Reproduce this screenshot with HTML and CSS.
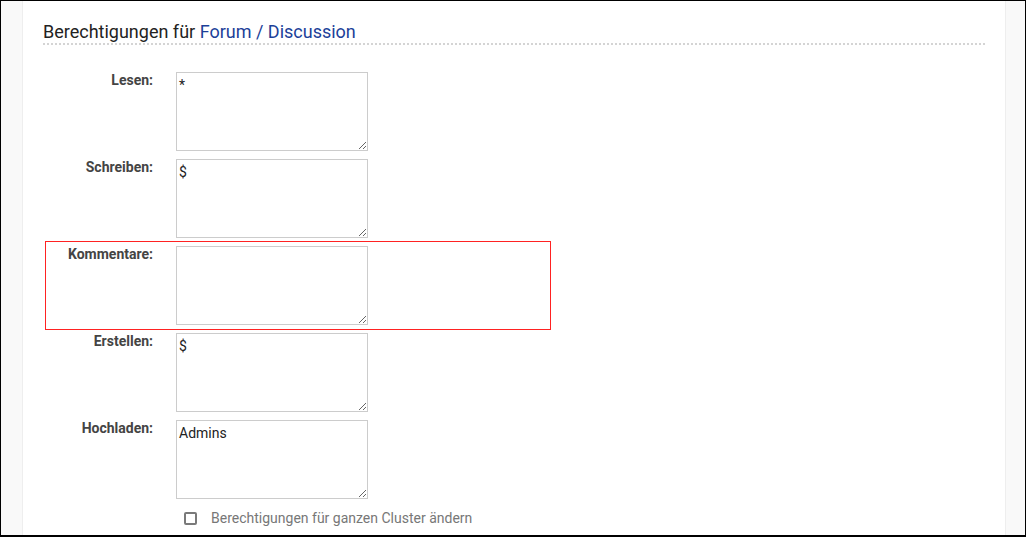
FILE: index.html
```html
<!DOCTYPE html>
<html lang="de">
<head>
  <meta charset="UTF-8">
  <title>Berechtigungen für Forum / Discussion</title>
  <link rel="stylesheet" href="styles.css">
</head>
<body>
  <div class="panel">
    <h2>Berechtigungen für <a href="#">Forum / Discussion</a></h2>

    <form class="perms">
      <div class="row">
        <label for="p-read">Lesen:</label>
        <textarea id="p-read">*</textarea>
      </div>
      <div class="row">
        <label for="p-write">Schreiben:</label>
        <textarea id="p-write">$</textarea>
      </div>
      <div class="row marked">
        <label for="p-comment">Kommentare:</label>
        <textarea id="p-comment"></textarea>
      </div>
      <div class="row">
        <label for="p-create">Erstellen:</label>
        <textarea id="p-create">$</textarea>
      </div>
      <div class="row">
        <label for="p-upload">Hochladen:</label>
        <textarea id="p-upload">Admins</textarea>
      </div>
      <div class="cluster">
        <span class="box"></span>
        <span>Berechtigungen für ganzen Cluster ändern</span>
      </div>
    </form>
  </div>
</body>
</html>
```

FILE: styles.css
```css
html, body {
  margin: 0;
  height: 100%;
}
body {
  box-sizing: border-box;
  height: 537px;
  overflow: hidden;
  border: 1px solid #000;
  border-bottom-width: 2px;
  background: #f9f9f9;
  padding: 0 19px 0 21px;
  font-family: Roboto, "Liberation Sans", sans-serif;
  color: #222;
}
.panel {
  background: #fff;
  border-left: 1px solid #eee;
  border-right: 1px solid #eee;
  height: 100%;
  padding: 21px 20px 0 20px;
  box-sizing: border-box;
}
h2 {
  margin: 0;
  font-size: 18px;
  font-weight: normal;
  line-height: 20px;
  padding-bottom: 1px;
  border-bottom: 2px dotted #d4d4d4;
  color: #222;
}
h2 a {
  color: #1c3f99;
  text-decoration: none;
}
.perms {
  margin: 23px 0 0 3px;
  width: 504px;
  display: flex;
  flex-direction: column;
}
.row {
  display: flex;
  padding: 4px 0;
}
.row.marked {
  outline: 1px solid #f22;
}
.row label {
  width: 130px;
  flex: none;
  box-sizing: border-box;
  padding: 0 23px 0 0;
  text-align: right;
  font-size: 14px;
  line-height: 16px;
  font-weight: bold;
  color: #444;
}
.row textarea {
  box-sizing: border-box;
  width: 192px;
  height: 79px;
  margin: 0;
  padding: 4px 2px 2px;
  border: 1px solid #ccc;
  font-family: Roboto, "Liberation Sans", sans-serif;
  font-size: 14px;
  color: #222;
}
.cluster {
  display: flex;
  align-items: center;
  gap: 14px;
  margin: 7px 0 0 138px;
  font-size: 14px;
  color: #777;
}
.cluster .box {
  width: 13px;
  height: 13px;
  box-sizing: border-box;
  border: 2px solid #7a7a7a;
  border-radius: 2px;
}
```
